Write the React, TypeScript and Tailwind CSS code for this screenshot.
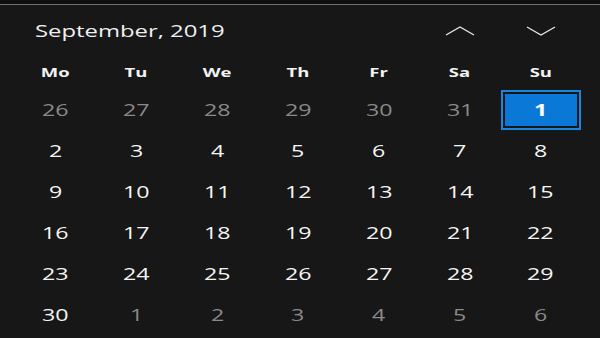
import React from 'react';

const dayNames = ['Mo', 'Tu', 'We', 'Th', 'Fr', 'Sa', 'Su'];

type Cell = { day: number; current: boolean };

function buildCells(): Cell[] {
  const cells: Cell[] = [];
  for (let d = 26; d <= 31; d++) cells.push({ day: d, current: false });
  for (let d = 1; d <= 30; d++) cells.push({ day: d, current: true });
  for (let d = 1; d <= 6; d++) cells.push({ day: d, current: false });
  return cells;
}

function Chevron({ up }: { up?: boolean }) {
  return (
    <svg width="30" height="10" viewBox="0 0 30 10" className="text-[#e6e6e6]">
      <polyline
        points={up ? '1,9 15,1 29,9' : '1,1 15,9 29,1'}
        fill="none"
        stroke="currentColor"
        strokeWidth="1.4"
      />
    </svg>
  );
}

export default function App() {
  const cells = buildCells();
  return (
    <div
      className="w-[600px] h-[338px] overflow-hidden bg-[#171717] text-white"
      style={{ fontFamily: '"Open Sans", "Noto Sans", sans-serif' }}
    >
      <div className="h-1 bg-[#0e0e0e]" />
      <div className="h-px bg-[#707070]" />

      <div className="pl-[15px]">
        {/* Header */}
        <div className="grid grid-cols-7 w-[566px] h-[51px] items-center">
          <div className="col-span-5 pl-[20px] text-[16px] text-[#f0f0f0]">
            <span className="inline-block origin-left scale-x-[1.49]">September, 2019</span>
          </div>
          <div className="flex justify-center">
            <Chevron up />
          </div>
          <div className="flex justify-center">
            <Chevron />
          </div>
        </div>

        {/* Day names */}
        <div className="grid grid-cols-7 w-[566px] h-[33px] items-center">
          {dayNames.map((n) => (
            <div key={n} className="text-center text-[13px] font-bold text-[#f2f2f2]">
              <span className="inline-block scale-x-[1.42]">{n}</span>
            </div>
          ))}
        </div>

        {/* Dates */}
        <div className="grid grid-cols-7 w-[566px]">
          {cells.map((c, i) => {
            const selected = c.current && c.day === 1;
            if (selected) {
              return (
                <div key={i} className="h-[41px] flex items-center justify-center">
                  <div className="w-[80px] h-[40px] border-2 border-[#1a86e0] p-[2px]">
                    <div className="w-full h-full bg-[#0a78d6] flex items-center justify-center text-[16px] font-bold">
                      <span className="inline-block scale-x-[1.45]">{c.day}</span>
                    </div>
                  </div>
                </div>
              );
            }
            return (
              <div
                key={i}
                className={`h-[41px] flex items-center justify-center text-[16px] ${
                  c.current ? 'font-medium text-[#f5f5f5]' : 'text-[#8a8a8a]'
                }`}
              >
                <span className="inline-block scale-x-[1.45]">{c.day}</span>
              </div>
            );
          })}
        </div>
      </div>
    </div>
  );
}
